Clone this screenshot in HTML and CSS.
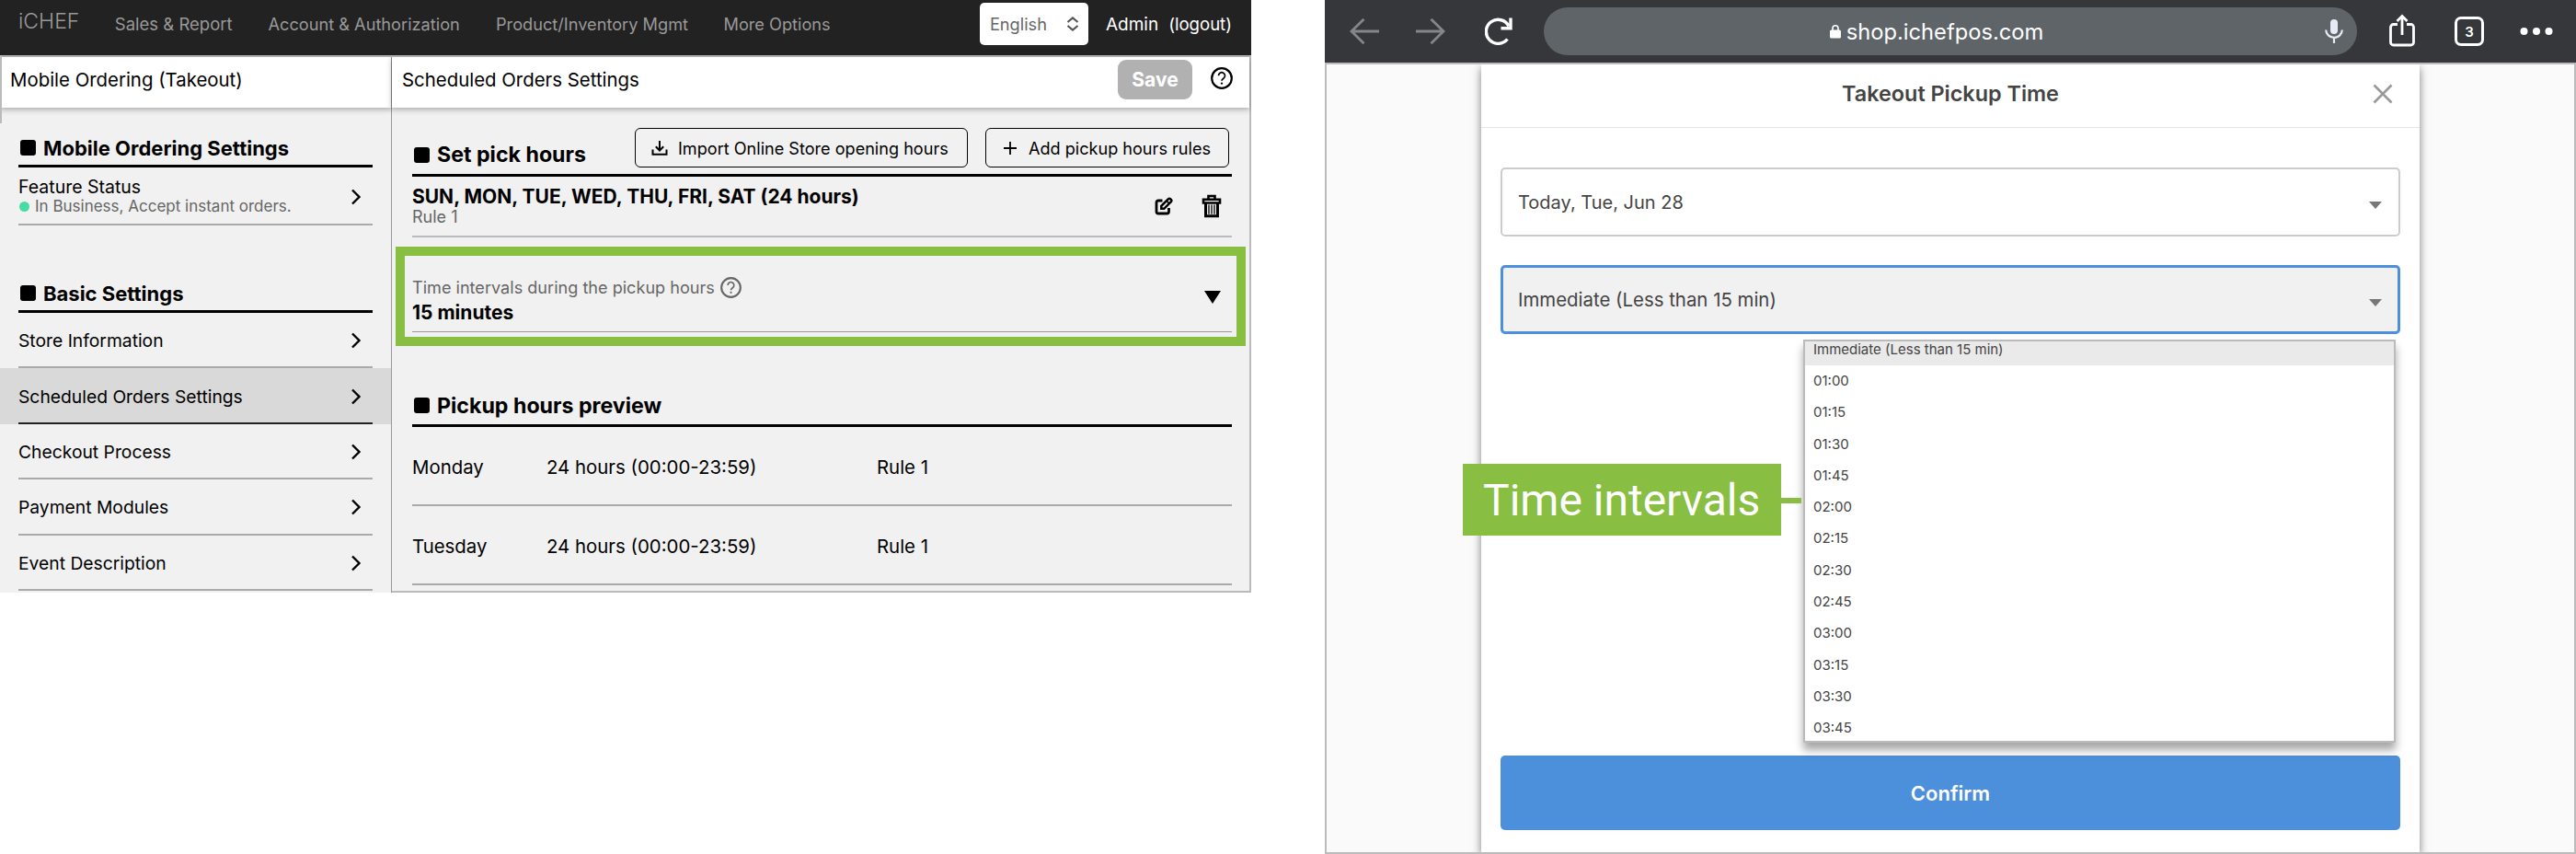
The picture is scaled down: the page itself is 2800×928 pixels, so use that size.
FILE: index.html
```html
<!DOCTYPE html>
<html lang="en">
<head>
  <meta charset="UTF-8" />
  <meta name="viewport" content="width=device-width, initial-scale=1.0"/>
  <title>iCHEF - Scheduled Orders Settings</title>
  <link rel="stylesheet" href="styles.css">
</head>
<body>
  <!-- shared icons -->
  <svg width="0" height="0" class="sprite">
    <symbol id="chevron" viewBox="0 0 12 18"><path d="M2 1.5 9.5 9 2 16.5" fill="none" stroke="#000" stroke-width="2.4"/></symbol>
    <symbol id="help" viewBox="0 0 24 24">
      <circle cx="12" cy="12" r="10.8" fill="none" stroke="currentColor" stroke-width="2.2"/>
      <path d="M8.500 9.300a3.500 3.500 0 1 1 5.400 2.900c-1.300.9-1.900 1.300-1.900 2.600" fill="none" stroke="currentColor" stroke-width="1.700"/>
      <circle cx="12" cy="17.600" r="1.200" fill="currentColor"/>
    </symbol>
  </svg>

  <div class="page">
    <section class="admin">
      <nav class="topbar">
        <span class="logo">iCHEF</span>
        <a class="nav-sales">Sales &amp; Report</a>
        <a class="nav-account">Account &amp; Authorization</a>
        <a class="nav-product">Product/Inventory Mgmt</a>
        <a class="nav-more">More Options</a>
        <button class="lang">
          <span>English</span>
          <svg width="14" height="16" viewBox="0 0 14 16"><path d="M1.500 6 7 1.500 12.500 6M1.500 10 7 14.500l5.500-4.500" fill="none" stroke="#555" stroke-width="2.200"/></svg>
        </button>
        <span class="user">Admin</span>
        <a class="logout">(logout)</a>
      </nav>

      <div class="admin-body">
        <aside class="sidebar">
          <header class="pane-header"><span class="pane-title">Mobile Ordering (Takeout)</span></header>
          <h2 class="side-heading"><i class="square"></i><span>Mobile Ordering Settings</span></h2>
          <a class="status">
            <div>
              <div class="status-name">Feature Status</div>
              <div class="status-text"><i class="dot"></i>In Business, Accept instant orders.</div>
            </div>
            <svg class="chevron"><use href="#chevron"/></svg>
          </a>
          <h2 class="side-heading basic"><i class="square"></i><span>Basic Settings</span></h2>
          <ul class="menu">
            <li><a>Store Information <svg class="chevron"><use href="#chevron"/></svg></a></li>
            <li class="active"><a>Scheduled Orders Settings <svg class="chevron"><use href="#chevron"/></svg></a></li>
            <li><a>Checkout Process <svg class="chevron"><use href="#chevron"/></svg></a></li>
            <li><a>Payment Modules <svg class="chevron"><use href="#chevron"/></svg></a></li>
            <li><a>Event Description <svg class="chevron"><use href="#chevron"/></svg></a></li>
          </ul>
        </aside>

        <main class="settings">
          <header class="pane-header">
            <span class="pane-title">Scheduled Orders Settings</span>
            <button class="save">Save</button>
            <svg class="help-top"><use href="#help"/></svg>
          </header>

          <div class="content">
            <div class="hours-head">
              <h2><i class="square"></i><span>Set pick hours</span></h2>
              <button class="outline import">
                <svg width="18" height="18" viewBox="0 0 18 18"><path d="M1.500 10.500v5.300h15v-5.300M9 1v10M4.800 7.300 9 11.500l4.200-4.200" fill="none" stroke="#000" stroke-width="2"/></svg>
                <span>Import Online Store opening hours</span>
              </button>
              <button class="outline add">
                <svg width="14" height="14" viewBox="0 0 14 14"><path d="M7 0v14M0 7h14" stroke="#000" stroke-width="1.800"/></svg>
                <span>Add pickup hours rules</span>
              </button>
            </div>

            <div class="rule">
              <div class="rule-info">
                <div class="rule-days">SUN, MON, TUE, WED, THU, FRI, SAT (24 hours)</div>
                <div class="rule-name">Rule 1</div>
              </div>
              <svg class="edit" viewBox="0 0 20 20"><g fill="none" stroke="#000"><path d="M8.500 4H4a2 2 0 0 0-2 2v10a2 2 0 0 0 2 2h9.500a2 2 0 0 0 2-2v-4" stroke-width="2.800"/><path d="M7.300 12.800V9.800L15 2.100a1.400 1.400 0 0 1 2 0l1 1a1.400 1.400 0 0 1 0 2l-7.700 7.700z" stroke-width="2.500"/><path d="m13 4.200 2.900 2.900" stroke-width="1.800"/></g></svg>
              <svg class="trash" viewBox="0 0 22 26"><g fill="none" stroke="#000"><path d="M2 9.500V5.800h18v3.700z" stroke-width="2.600"/><path d="M7.500 6V2h7v4" stroke-width="2.600"/><path d="M4.500 9.500v14.300h13V9.500" stroke-width="3"/><path d="M8 11.500v10.200M11 11.500v10.200M14 11.500v10.200" stroke-width="1.300"/></g></svg>
            </div>

            <div class="highlight">
              <div class="interval">
                <div class="interval-label"><span>Time intervals during the pickup hours</span><svg><use href="#help"/></svg></div>
                <div class="interval-value">15 minutes</div>
                <i class="triangle"></i>
              </div>
            </div>

            <h2 class="preview-heading"><i class="square"></i><span>Pickup hours preview</span></h2>
            <div class="preview-row"><span>Monday</span><span>24 hours (00:00-23:59)</span><span>Rule 1</span></div>
            <div class="preview-row"><span>Tuesday</span><span>24 hours (00:00-23:59)</span><span>Rule 1</span></div>
          </div>
        </main>
      </div>
    </section>

    <section class="shop">
      <div class="browser">
        <svg class="back" viewBox="0 0 32 28"><path d="M32 14H2M15.500.8 2 14l13.500 13.200" fill="none" stroke="#85868a" stroke-width="2.800"/></svg>
        <svg class="forward" viewBox="0 0 32 28"><path d="M0 14h30M16.500.8 30 14 16.500 27.200" fill="none" stroke="#85868a" stroke-width="2.800"/></svg>
        <svg class="reload" viewBox="0 0 30 30"><path d="M24.500 23.500A13 13 0 1 1 26 9.500" fill="none" stroke="#fff" stroke-width="3.400"/><path d="M28 .5v11.200H17.500" fill="none" stroke="#fff" stroke-width="3.400"/></svg>
        <div class="url">
          <svg width="12" height="15" viewBox="0 0 12 15"><rect y="5.500" width="12" height="9" rx="1.500" fill="#fff"/><path d="M3 6V3.800a3 3 0 0 1 6 0V6" fill="none" stroke="#fff" stroke-width="1.600"/></svg>
          <span>shop.ichefpos.com</span>
          <svg class="mic" viewBox="0 0 20 26"><rect x="6" y="0" width="8" height="16" rx="4" fill="#e8eaf6"/><path d="M1.200 11.500a8.800 8.300 0 0 0 17.600 0M10 20v6" fill="none" stroke="#e8eaf6" stroke-width="2.200"/></svg>
        </div>
        <svg class="share" viewBox="0 0 28 36"><path d="M9 11.500H4.500a3 3 0 0 0-3 3V31a3 3 0 0 0 3 3h19a3 3 0 0 0 3-3V14.500a3 3 0 0 0-3-3H19M14 23V2.500M8.500 8 14 2.500 19.500 8" fill="none" stroke="#fff" stroke-width="2.800"/></svg>
        <span class="tabs">3</span>
        <svg class="dots" viewBox="0 0 36 8"><g fill="#fff"><circle cx="4.500" cy="4" r="4"/><circle cx="18" cy="4" r="4"/><circle cx="31.500" cy="4" r="4"/></g></svg>
      </div>

      <div class="shop-body">
        <div class="dialog">
          <header class="dialog-header">
            <span>Takeout Pickup Time</span>
            <svg class="close" viewBox="0 0 22 22"><path d="m1.500 1.500 19 19M20.500 1.500l-19 19" stroke="#999" stroke-width="2.600"/></svg>
          </header>
          <div class="field"><span>Today, Tue, Jun 28</span><i class="caret"></i></div>
          <div class="field focused"><span>Immediate (Less than 15 min)</span><i class="caret"></i>
            <ul class="options">
              <li class="selected">Immediate (Less than 15 min)</li>
              <li>01:00</li>
              <li>01:15</li>
              <li>01:30</li>
              <li>01:45</li>
              <li>02:00</li>
              <li>02:15</li>
              <li>02:30</li>
              <li>02:45</li>
              <li>03:00</li>
              <li>03:15</li>
              <li>03:30</li>
              <li>03:45</li>
            </ul>
          </div>
          <button class="confirm">Confirm</button>
          <div class="callout">Time intervals</div>
        </div>
      </div>
    </section>
  </div>
</body>
</html>
```
FILE: styles.css
```css
* {
  box-sizing: border-box;
}

body {
  margin: 0;
  background: #fff;
  font-family: Inter, "Liberation Sans", sans-serif;
  font-size: 20.4px;
  color: #000;
}

h2, ul {
  margin: 0;
  padding: 0;
}

ul {
  list-style: none;
}

button {
  margin: 0;
  padding: 0;
  border: none;
  font-family: inherit;
}

svg {
  display: block;
  flex: none;
}

.sprite {
  position: absolute;
}

.page {
  display: flex;
  justify-content: space-between;
  width: 2800px;
  height: 928px;
  white-space: nowrap;
}

/* admin */
.admin {
  position: relative;
  width: 1360px;
  height: 644px;
  background: #f1f1f1;
  overflow: hidden;
}

.admin::before {
  content: "";
  position: absolute;
  z-index: 2;
  left: 0;
  top: 60px;
  width: 2px;
  height: 74px;
  background: #bbb;
}

.topbar {
  display: flex;
  align-items: center;
  height: 62px;
  padding: 0 21px 8px 20px;
  background: #222;
  border-bottom: 2px solid #bbb;
  color: #999;
  font-size: 18.2px;
}

.logo {
  width: 105px;
  padding-bottom: 7px;
  font-size: 23px;
  font-weight: 300;
}

.nav-sales {
  width: 167px;
  font-size: 18.5px;
}

.nav-account {
  width: 248px;
}

.nav-product {
  width: 248px;
}

.nav-more {
  width: 279px;
}

.lang {
  display: flex;
  align-items: center;
  justify-content: space-between;
  flex: none;
  width: 118px;
  height: 46px;
  padding: 0 10px 0 11px;
  border-radius: 5px;
  background: #fff;
  color: #666;
  font-size: 18.2px;
}

.user, .logout {
  color: #fff;
  margin-left: 19px;
  font-size: 19px;
}

.logout {
  margin-left: 11px;
  font-size: 18.6px;
}

.admin-body {
  display: flex;
  height: 582px;
}

.sidebar {
  width: 426px;
  border-right: 1px solid #999;
}

.pane-header {
  display: flex;
  align-items: center;
  height: 55px;
  padding: 0 18px 6px 11px;
  background: #fff;
  box-shadow: 0 2px 6px rgba(0, 0, 0, 0.3);
}

.pane-title {
  flex: 1;
}

h2 {
  display: flex;
  align-items: center;
  font-size: 23.2px;
  font-weight: 700;
}

.square {
  width: 17px;
  height: 17px;
  margin: 0 8px 0 2px;
  border-radius: 3px;
  background: #000;
}

.side-heading {
  height: 40px;
  margin: 25px 20px 0;
  border-bottom: 3px solid #000;
  font-size: 22px;
}

.basic {
  margin-top: 55px;
}

.status {
  display: flex;
  justify-content: space-between;
  align-items: center;
  height: 63px;
  margin: 0 20px;
  padding: 3px 12px 0 0;
  border-bottom: 2px solid #aaa;
}

.status-name {
  line-height: 20px;
  font-size: 19.5px;
}

.status-text {
  display: flex;
  align-items: center;
  line-height: 22px;
  font-size: 17px;
  color: #666;
}

.dot {
  width: 11px;
  height: 11px;
  margin: 0 6px 0 1px;
  border-radius: 50%;
  background: #48dba4;
}

.chevron {
  width: 12px;
  height: 18px;
}

.menu li {
  padding: 0 20px;
}

.menu a {
  display: flex;
  justify-content: space-between;
  align-items: center;
  height: 60.4px;
  padding: 2px 12px 0 0;
  border-bottom: 2px solid #aaa;
  font-size: 19.3px;
}

.menu .active {
  background: #d9d9d9;
}

.menu .active a {
  border-color: #222;
}

.settings {
  flex: 1;
  border-right: 2px solid #bbb;
  border-bottom: 2px solid #bbb;
}

.save {
  width: 81px;
  height: 43px;
  border-radius: 9px;
  background: #b1b1b1;
  color: #fff;
  font-size: 21px;
  font-weight: 700;
}

.help-top {
  width: 24px;
  height: 24px;
  margin: 0 0 4px 20px;
}

.content {
  padding: 0 19px 0 22px;
}

.hours-head {
  display: flex;
  align-items: flex-start;
  height: 53px;
  margin-top: 22px;
  padding-right: 3px;
  border-bottom: 3px solid #000;
}

.hours-head h2 {
  flex: 1;
  margin-top: 8px;
  line-height: 42px;
}

.outline {
  display: flex;
  align-items: center;
  height: 43px;
  border: 1.5px solid #000;
  border-radius: 6px;
  background: #f1f1f1;
  color: #000;
  font-size: 18.1px;
}

.import {
  width: 362px;
  padding-left: 17px;
  gap: 11px;
}

.add {
  width: 265px;
  margin-left: 19px;
  padding-left: 19px;
  gap: 13px;
}

.rule {
  display: flex;
  align-items: center;
  height: 66px;
  padding: 3px 11px 0 0;
  border-bottom: 2px solid #bbb;
}

.rule-info {
  flex: 1;
}

.rule-days {
  line-height: 20px;
  font-size: 21px;
  font-weight: 700;
}

.rule-name {
  line-height: 24px;
  font-size: 18px;
  color: #666;
}

.edit {
  width: 20px;
  height: 20px;
  margin: 0 31px 3px 0;
}

.trash {
  width: 22px;
  height: 26px;
  margin-bottom: 3px;
}

/* green frame around the interval setting */
.highlight {
  height: 108px;
  margin: 10px -15px 0 -18px;
  padding: 0 5px 0 8px;
  border: 10px solid #88be42;
}

.interval {
  position: relative;
  height: 83px;
  padding-top: 23px;
  border-bottom: 1px solid #999;
}

.interval-label {
  display: flex;
  align-items: center;
  height: 22px;
  gap: 6px;
  font-size: 18.1px;
  color: #666;
}

.interval-label svg {
  width: 23px;
  height: 23px;
}

.interval-value {
  line-height: 34px;
  font-size: 21px;
  font-weight: 700;
}

.triangle {
  position: absolute;
  right: 12px;
  top: 38px;
  border: 9px solid transparent;
  border-top: 14px solid #000;
  border-bottom: 0;
}

.preview-heading {
  height: 44px;
  margin-top: 44px;
  border-bottom: 3px solid #000;
}

.preview-row {
  display: grid;
  grid-template-columns: 146px 359px 1fr;
  align-items: center;
  height: 86px;
  padding-top: 2px;
  border-bottom: 2px solid #aaa;
}

/* online shop */
.shop {
  width: 1360px;
}

.browser {
  display: flex;
  align-items: center;
  height: 70px;
  padding: 0 25px 0 27px;
  background: #36373b;
  border-bottom: 2px solid #bbb;
  color: #fff;
}

.back, .forward {
  width: 32px;
  height: 28px;
}

.forward {
  margin-left: 40px;
}

.reload {
  width: 30px;
  height: 30px;
  margin-left: 43px;
}

.url {
  position: relative;
  display: flex;
  align-items: center;
  justify-content: center;
  gap: 6px;
  width: 884px;
  height: 52px;
  margin-left: 34px;
  padding-right: 30px;
  border-radius: 26px;
  background: #5f6468;
  font-size: 23.7px;
}

.mic {
  position: absolute;
  right: 15px;
  top: 13px;
  width: 20px;
  height: 26px;
}

.share {
  width: 28px;
  height: 36px;
  margin: 0 43px 2px 35px;
}

.tabs {
  width: 32px;
  height: 32px;
  border: 3px solid #fff;
  border-radius: 7px;
  font-size: 15px;
  font-weight: 600;
  line-height: 27px;
  text-align: center;
}

.dots {
  width: 36px;
  height: 8px;
  margin-left: 39px;
}

.shop-body {
  height: 858px;
  padding: 0 168px;
  border: 2px solid #bbb;
  border-top: 0;
  background: #fafafa;
  overflow: hidden;
}

.dialog {
  position: relative;
  height: 856px;
  padding: 0 21px;
  background: #fff;
  box-shadow: 0 4px 9px rgba(0, 0, 0, 0.5);
  color: #444;
}

.dialog-header {
  position: relative;
  height: 69px;
  margin: 0 -21px 43px;
  border-bottom: 1px solid #e5e5e5;
  font-size: 23.4px;
  font-weight: 600;
  line-height: 64px;
  text-align: center;
}

.close {
  position: absolute;
  right: 29px;
  top: 21px;
  width: 22px;
  height: 22px;
}

.field {
  position: relative;
  display: flex;
  align-items: center;
  justify-content: space-between;
  height: 75px;
  padding: 0 18px 0 17px;
  border: 2px solid #ccc;
  border-radius: 5px;
  font-size: 20px;
}

.focused {
  margin-top: 31px;
  padding: 0 17px 0 16px;
  border: 3px solid #4c8fdb;
  background: #f1f1f1;
  font-size: 20.4px;
}

.caret {
  margin-top: 6px;
  border: 7px solid transparent;
  border-top: 8px solid #777;
  border-bottom: 0;
}

.options {
  position: absolute;
  right: 2px;
  top: 78px;
  width: 644px;
  height: 438px;
  border: 2px solid #bbb;
  background: #fff;
  box-shadow: 0 8px 9px rgba(0, 0, 0, 0.35);
  font-size: 15px;
}

.options li {
  height: 34.3px;
  padding-left: 9px;
  line-height: 34.3px;
}

.options .selected {
  height: 26px;
  line-height: 17px;
  background: #eaeaea;
}

.confirm {
  display: block;
  width: 100%;
  height: 81px;
  margin-top: 458px;
  border-radius: 5px;
  background: #4c8fdb;
  color: #fff;
  font-size: 22px;
  font-weight: 600;
}

.callout {
  position: absolute;
  left: -20px;
  top: 434px;
  width: 346px;
  height: 78px;
  padding-left: 22px;
  background: #88be42;
  color: #fff;
  font-family: Roboto, sans-serif;
  font-size: 48px;
  line-height: 80px;
}

.callout::after {
  content: "";
  position: absolute;
  left: 100%;
  top: 37px;
  width: 22px;
  height: 6px;
  background: #88be42;
}
```
